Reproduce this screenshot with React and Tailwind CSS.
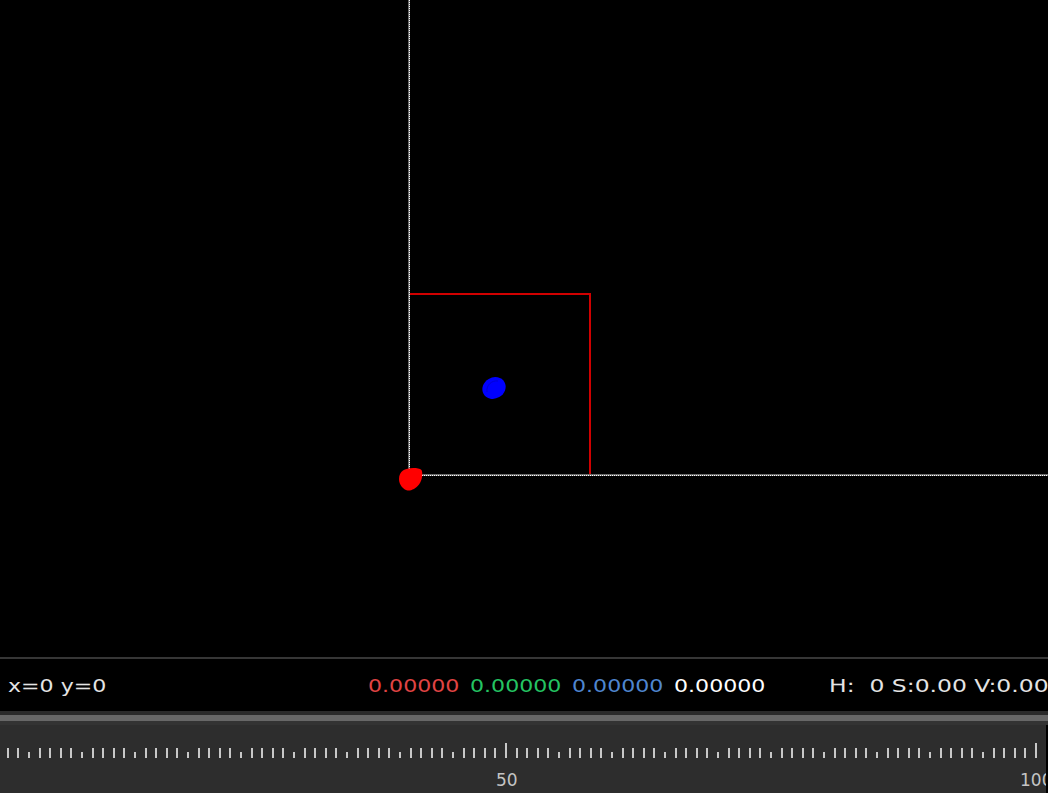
import React from "react";

function Canvas() {
  return (
    <svg width="1048" height="657" className="block" shapeRendering="crispEdges">
      <rect x="0" y="0" width="1048" height="657" fill="#000" />
      {/* red square */}
      <rect x="409" y="294" width="181" height="181" fill="none" stroke="#d00000" strokeWidth="2" />
      {/* vertical axis */}
      <rect x="408" y="0" width="1" height="476" fill="#6b6b6b" />
      <rect x="409" y="0" width="1" height="476" fill="#6b6b6b" />
      <line x1="409.5" y1="0" x2="409.5" y2="476" stroke="#ffffff" strokeWidth="1" strokeDasharray="1 1" />
      {/* horizontal axis */}
      <rect x="408" y="474" width="640" height="1" fill="#6b6b6b" />
      <rect x="408" y="475" width="640" height="1" fill="#6b6b6b" />
      <line x1="408" y1="475.5" x2="1048" y2="475.5" stroke="#ffffff" strokeWidth="1" strokeDasharray="1 1" />
      <g shapeRendering="geometricPrecision">
        {/* blue blob */}
        <ellipse cx="494" cy="388" rx="12" ry="10.5" transform="rotate(-30 494 388)" fill="#0000ff" />
        <path d="M487 392 C486 385, 492 380, 498 381" fill="none" stroke="#0000c8" strokeWidth="0.8" />
        {/* red blob */}
        <path
          d="M403 470.5 C407 467.5, 418 467, 421.5 470 C423 473, 422.5 480, 419 484.5 C416 488.5, 411 491, 407.5 490.5 C403.5 489.5, 399 485, 399 479 C399 475, 400.5 472.5, 403 470.5 Z"
          fill="#ff0000"
        />
      </g>
    </svg>
  );
}

function Ruler() {
  const ticks = [];
  for (let u = 0; u <= 101; u++) {
    const x = Math.round(505 + (u - 50) * 10.6);
    if (x < -2 || x > 1046) continue;
    let y = 23;
    let h = 10;
    if (u % 50 === 0) {
      y = 18;
      h = 15;
    } else if (u % 5 === 0) {
      y = 27;
      h = 6;
    }
    ticks.push(<rect key={u} x={x} y={y} width="2" height={h} fill="#c8c8c8" />);
  }
  return (
    <div className="relative flex-1 overflow-hidden bg-[#2d2d2d]">
      <svg width="1048" height="68" className="block" shapeRendering="crispEdges">
        {ticks}
      </svg>
      <span className="absolute left-[496px] top-[47px] font-['DejaVu_Sans'] text-[17px] leading-[17px] text-[#c4c4c4]">
        50
      </span>
      <span className="absolute left-[1020px] top-[47px] font-['DejaVu_Sans'] text-[17px] leading-[17px] whitespace-nowrap text-[#c4c4c4]">
        100
      </span>
      <div className="absolute right-0 top-0 h-full w-[2px] bg-black" />
    </div>
  );
}

function Cell({ className, wide, children }) {
  return (
    <div className={"shrink-0 " + className}>
      <span
        className={
          "inline-block origin-left whitespace-pre " + (wide ? "scale-x-[1.38]" : "scale-x-[1.3]")
        }
      >
        {children}
      </span>
    </div>
  );
}

export default function App() {
  return (
    <div className="flex h-[793px] w-[1048px] flex-col overflow-hidden bg-black">
      <Canvas />
      <div className="h-[2px] bg-[#363636]" />
      <div className="flex h-[52px] items-start overflow-hidden bg-black pt-[19px] font-['DejaVu_Sans'] text-[17px] leading-[17px]">
        <Cell className="w-[368px] pl-[8px] text-[#e4e4e4]">x=0 y=0</Cell>
        <Cell className="w-[102px] text-[#e04444]">0.00000</Cell>
        <Cell className="w-[102px] text-[#24c463]">0.00000</Cell>
        <Cell className="w-[102px] text-[#4f86d0]">0.00000</Cell>
        <Cell className="w-[155px] text-[#ffffff]">0.00000</Cell>
        <Cell wide className="text-[#e4e4e4]">H:  0 S:0.00 V:0.00</Cell>
      </div>
      <div className="h-[4px] bg-[#2a2a2a]" />
      <div className="h-[6px] bg-[#676767]" />
      <div className="h-[4px] bg-[#333333]" />
      <Ruler />
    </div>
  );
}
